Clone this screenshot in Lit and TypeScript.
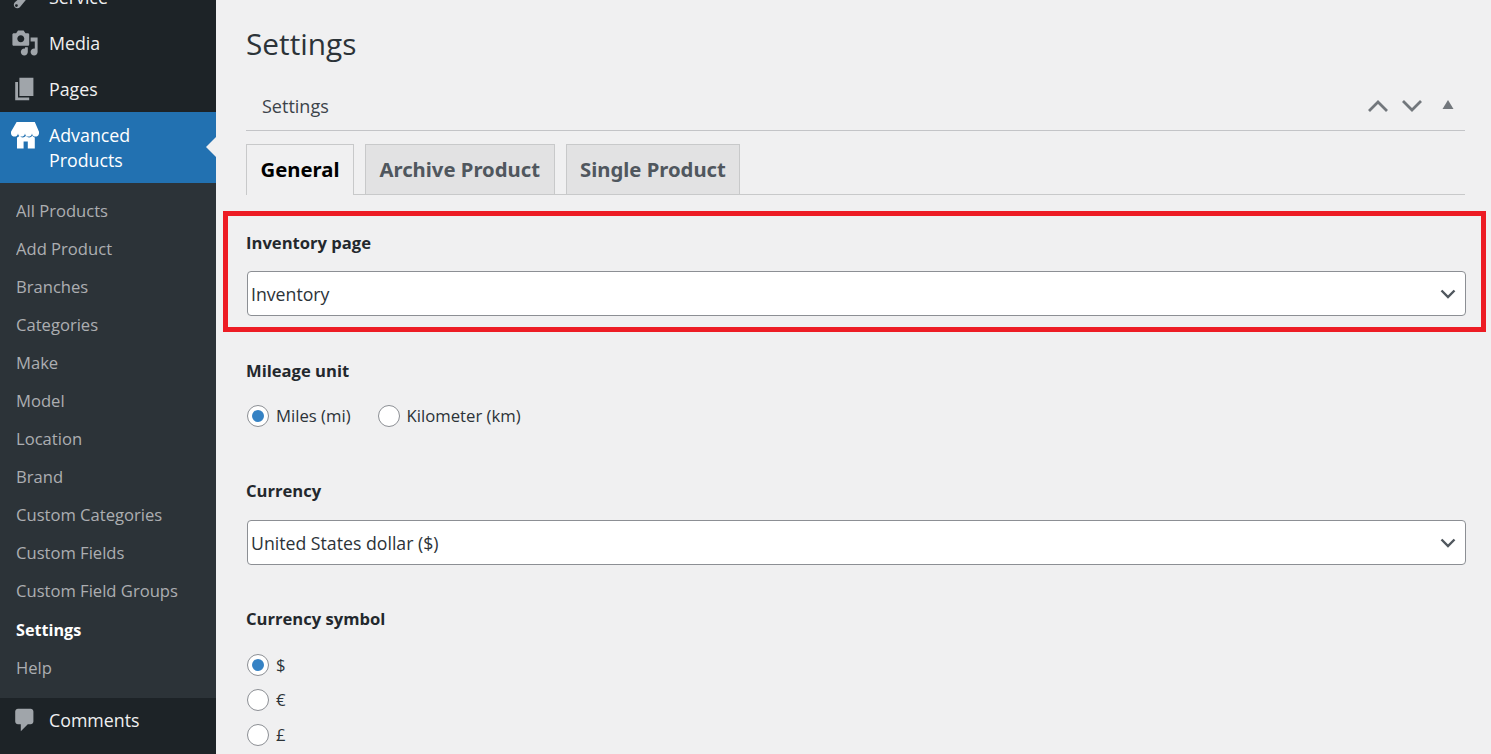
import { LitElement, html, css, svg } from "lit";
import { customElement } from "lit/decorators.js";

const subItems = ["All Products","Add Product","Branches","Categories","Make","Model","Location","Brand","Custom Categories","Custom Fields","Custom Field Groups","Settings","Help"];

const icons = {
  service: svg`<path fill-rule="evenodd" fill="#a0a5aa" d="M16.680 9.770c-1.340 1.340-3.300 1.670-4.950.99l-5.410 6.520c-.99.99-2.590.99-3.580 0s-.99-2.590 0-3.580l6.520-5.420c-.68-1.650-.35-3.610.99-4.950 1.280-1.280 3.120-1.620 4.720-1.060l-2.890 2.890 2.820 2.820 2.890-2.890c.56 1.600.22 3.440-1.110 4.680zM3.180 16.820c.39.39 1.020.39 1.410 0s.39-1.020 0-1.410-1.020-.39-1.410 0-.39 1.020 0 1.410z"/>`,
  media: svg`<path fill-rule="evenodd" fill="#a0a5aa" d="M13 11V4c0-.55-.45-1-1-1h-1.670L9 1H5L3.670 3H2c-.55 0-1 .45-1 1v7c0 .55.45 1 1 1h10c.55 0 1-.45 1-1zM7 4.500c1.380 0 2.500 1.120 2.500 2.500S8.380 9.500 7 9.500 4.500 8.380 4.500 7 5.620 4.500 7 4.500zM14 6h5v10.500c0 1.380-1.120 2.500-2.500 2.500S14 17.880 14 16.500s1.120-2.500 2.500-2.500c.17 0 .34.02.5.05V9h-3V6zm-4 8.050V13h2v3.500c0 1.380-1.120 2.500-2.500 2.500S7 17.880 7 16.500 8.120 14 9.500 14c.17 0 .34.02.5.05z"/>`,
  pages: svg`<path fill="#a0a5aa" d="M6 15V2h10v13H6zm-1 1h8v2H3V5h2v11z"/>`,
  store: svg`<path fill="#fff" d="M1 10c.41.29.96.43 1.500.43.55 0 1.090-.14 1.500-.43.62-.46 1-1.170 1-2 0 .83.37 1.540 1 2 .41.29.96.43 1.500.43.55 0 1.090-.14 1.500-.43.62-.46 1-1.170 1-2 0 .83.37 1.540 1 2 .41.29.96.43 1.510.43.54 0 1.080-.14 1.490-.43.62-.46 1-1.170 1-2 0 .83.37 1.540 1 2 .41.29.96.43 1.490.43.55 0 1.090-.14 1.510-.43.63-.46 1-1.170 1-2V7l-3-7H4L0 7v1c0 .83.37 1.540 1 2zm2 8.990h5.990v-5h3.010v5h5v-7.930c-.36-.07-.7-.22-.99-.44-.34-.24-.6-.56-.79-.93-.19.37-.45.69-.79.93-.41.29-.95.44-1.490.44-.55 0-1.100-.15-1.510-.44-.33-.24-.6-.56-.79-.93-.19.37-.45.69-.78.93-.42.29-.96.44-1.510.44-.54 0-1.080-.15-1.500-.44-.33-.24-.59-.56-.78-.93-.19.37-.46.69-.79.93-.29.22-.63.36-1 .44v7.930z"/>`,
  comments: svg`<path fill="#a0a5aa" d="M5 2h9c1.100 0 2 .9 2 2v7c0 1.100-.9 2-2 2h-2l-5 5v-5H5c-1.100 0-2-.9-2-2V4c0-1.100.9-2 2-2z"/>`,
};

@customElement("app-root")
export class AppRoot extends LitElement {
  static styles = css`
    :host { display: block; height: 754px; overflow: hidden; background: #f0f0f1; font-family: "Open Sans", "Noto Sans", sans-serif; color: #2c3338; }
    .page { display: flex; height: 754px; position: relative; overflow: hidden; }
    .side { width: 216px; flex: none; background: #1d2327; margin-top: -26px; height: 780px; }
    .item { height: 46px; box-sizing: border-box; padding-bottom: 1px; display: flex; align-items: center; color: #f0f0f1; font-size: 17.800px; }
    .item.last { padding-bottom: 2px; }
    .ico { width: 49px; flex: none; display: flex; padding-left: 10.500px; box-sizing: border-box; }
    .ico svg { width: 28px; height: 28px; }
    .cur { height: 71px; background: #2271b1; color: #fff; position: relative; line-height: 25px; align-items: flex-start; padding: 11px 0 0; }
    .cur::after { content: ""; position: absolute; right: 0; top: 25px; border: 10px solid transparent; border-left: 0; border-right-color: #f0f0f1; }
    .cur .ico { margin-top: -1px; }
    .sub { background: #2c3338; height: 515px; padding-top: 9px; box-sizing: border-box; }
    .sub div { height: 38px; line-height: 38px; padding-left: 16px; font-size: 16.600px; color: #c3c4c7; opacity: .85; }
    .sub .on { color: #fff; font-weight: 700; opacity: 1; margin-top: 1px; font-size: 16.200px; }
    .main { flex: 1; padding: 0 26px 0 30px; min-width: 0; }
    h1 { margin: 0; font-size: 29.800px; font-weight: 400; line-height: 40px; padding-top: 24px; color: #2c3338; }
    .head { height: 67px; box-sizing: border-box; border-bottom: 1px solid #c3c4c7; display: flex; align-items: center; justify-content: space-between; padding: 18px 0 0 16px; font-size: 18px; color: #3c434a; }
    .arrows { display: flex; align-items: center; gap: 12px; padding-right: 11px; }
    .arrows svg { display: block; }
    .tri { margin: 0 0 3px 7px; }
    .tabs { display: flex; gap: 11px; margin-top: 13px; border-bottom: 1px solid #c8c9ca; height: 50px; }
    .tab { height: 50px; box-sizing: border-box; border: 1px solid #c8c9ca; border-bottom: 0; padding: 0 13.500px; background: #e2e2e3; font-weight: 700; font-size: 20.300px; line-height: 48px; color: #50575e; font-family: "Noto Sans", "Open Sans", sans-serif; }
    .tab.active { background: #f0f0f1; color: #000; height: 51px; }
    .label { font-weight: 700; font-size: 16.600px; line-height: 24px; color: #23282d; }
    .sel { height: 45px; margin: 16px -1px 0 1px; box-sizing: border-box; border: 1px solid #8c8f94; border-radius: 4px; background: #fff; display: flex; align-items: center; justify-content: space-between; padding: 0 9px 0 3px; font-size: 17.700px; color: #2c3338; }
    .sel.second { margin-top: 17px; }
    .f1 { margin-top: 36px; }
    .f2 { margin-top: 43px; }
    .f3 { margin-top: 52px; }
    .f4 { margin-top: 42px; }
    .radios { display: flex; gap: 27px; margin-top: 20px; padding-left: 1px; }
    .r { display: flex; align-items: center; gap: 7px; font-size: 16.700px; height: 24px; color: #2c3338; }
    .rr { display: flex; flex-direction: column; gap: 11px; margin-top: 21px; padding-left: 1px; }
    .dot { width: 22px; height: 22px; margin-top: 2px; box-sizing: border-box; border-radius: 50%; border: 1px solid #8c8f94; background: #fff; display: flex; align-items: center; justify-content: center; flex: none; }
    .dot.on::after { content: ""; width: 12px; height: 12px; border-radius: 50%; background: #3582c4; }
    .mark { position: absolute; left: 223px; top: 211px; width: 1263px; height: 121px; box-sizing: border-box; border: 5px solid #ed1c24; pointer-events: none; }
  `;

  private chev() {
    return html`<svg width="16" height="10" viewBox="0 0 16 10"><path d="M1.500 1.500 8 8l6.500-6.500" fill="none" stroke="#50575e" stroke-width="2.400"/></svg>`;
  }
  private radio(t: string, on = false) {
    return html`<div class="r"><span class="dot ${on ? "on" : ""}"></span>${t}</div>`;
  }

  render() {
    return html`<div class="page">
      <nav class="side">
        <div class="item"><span class="ico"><svg viewBox="0 0 20 20">${icons.service}</svg></span>Service</div>
        <div class="item"><span class="ico"><svg viewBox="0 0 20 20">${icons.media}</svg></span>Media</div>
        <div class="item"><span class="ico"><svg viewBox="0 0 20 20">${icons.pages}</svg></span>Pages</div>
        <div class="item cur"><span class="ico"><svg viewBox="0 0 20 20">${icons.store}</svg></span><span>Advanced<br />Products</span></div>
        <div class="sub">${subItems.map(s => html`<div class=${s === "Settings" ? "on" : ""}>${s}</div>`)}</div>
        <div class="item last"><span class="ico"><svg viewBox="0 0 20 20">${icons.comments}</svg></span>Comments</div>
      </nav>
      <main class="main">
        <h1>Settings</h1>
        <div class="head"><span>Settings</span>
          <span class="arrows">
            <svg width="22" height="14" viewBox="0 0 22 14"><path d="M2 12 11 3l9 9" fill="none" stroke="#72777c" stroke-width="2.800"/></svg>
            <svg width="22" height="14" viewBox="0 0 22 14"><path d="M2 2l9 9 9-9" fill="none" stroke="#72777c" stroke-width="2.800"/></svg>
            <svg class="tri" width="12" height="10" viewBox="0 0 12 10"><path d="M6 0l5.500 9H.5z" fill="#72777c"/></svg>
          </span>
        </div>
        <div class="tabs">
          <div class="tab active">General</div>
          <div class="tab">Archive Product</div>
          <div class="tab">Single Product</div>
        </div>
        <div class="label f1">Inventory page</div>
        <div class="sel">Inventory ${this.chev()}</div>
        <div class="label f2">Mileage unit</div>
        <div class="radios">${this.radio("Miles (mi)", true)}${this.radio("Kilometer (km)")}</div>
        <div class="label f3">Currency</div>
        <div class="sel second">United States dollar ($) ${this.chev()}</div>
        <div class="label f4">Currency symbol</div>
        <div class="rr">${this.radio("$", true)}${this.radio("€")}${this.radio("£")}</div>
      </main>
      <div class="mark"></div>
    </div>`;
  }
}
